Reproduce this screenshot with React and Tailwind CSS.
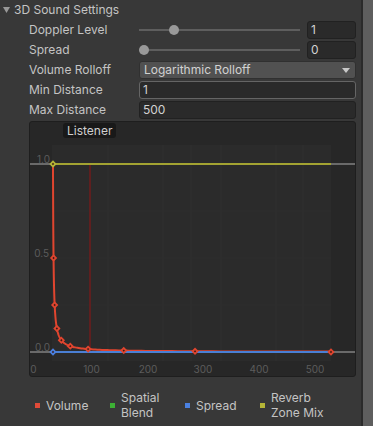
import React from "react";

const font = "font-['Inter','Noto_Sans',sans-serif]";

// chart geometry, in svg coords (panel inner origin)
const xOf = (d) => 22.44 + 0.557 * d;
const yOf = (v) => 230 - 188 * v;

const curvePoints = () => {
  const pts = [];
  for (let d = 1; d <= 500; d *= 1.05) pts.push([xOf(d), yOf(1 / d)]);
  pts.push([xOf(500), yOf(1 / 500)]);
  return pts.map((p) => p[0].toFixed(2) + "," + p[1].toFixed(2)).join(" ");
};

const keys = [1, 2, 4, 8, 16, 32, 64, 128, 256];

const Key = ({ x, y, color }) => (
  <g transform={`translate(${x} ${y}) rotate(45)`}>
    <rect x={-2.6} y={-2.6} width={5.2} height={5.2} fill={color} />
    <rect x={-0.8} y={-0.8} width={1.6} height={1.6} fill="#3a1a14" />
  </g>
);

const Slider = ({ left, value }) => (
  <div className="flex items-center h-[18px] gap-[7px]">
    <div className="relative flex-1 h-[18px] flex items-center">
      <div className="w-full h-[2px] bg-[#5e5e5e]" />
      <div
        className="absolute top-[4px] w-[10px] h-[10px] rounded-full bg-[#999999]"
        style={{ left }}
      />
    </div>
    <div className="w-[49px] h-[18px] rounded-[3px] border border-[#212121] bg-[#2a2a2a] pl-[3px] flex items-center text-[#d2d2d2]">
      {value}
    </div>
  </div>
);

const Row = ({ label, children }) => (
  <div className="h-[20px] flex items-center pl-[29px] pr-[5px]">
    <div className="w-[110px] text-[#c4c4c4]">{label}</div>
    <div className="flex-1">{children}</div>
  </div>
);

const Field = ({ value, hover }) => (
  <div
    className={
      "h-[18px] rounded-[3px] border bg-[#2a2a2a] pl-[3px] flex items-center text-[#d2d2d2] " +
      (hover ? "border-[#656565]" : "border-[#212121]")
    }
  >
    {value}
  </div>
);

const Chart = () => (
  <svg width="325" height="254" className="block">
    <rect x="22" y="23" width="279" height="216" fill="#2b2b2b" />
    {[78, 133, 161, 191, 246, 273].map((x) => (
      <line key={x} x1={x} y1={23} x2={x} y2={239} stroke="#303030" strokeWidth="1" />
    ))}
    {[89, 136, 183].map((y) => (
      <line key={y} x1={22} y1={y} x2={301} y2={y} stroke="#2f2f2f" strokeWidth="1" />
    ))}
    <g fill="#5c5c5c" fontFamily="Inter, sans-serif" fontSize="10">
      <text x="20" y="41" textAnchor="end">1.0</text>
      <text x="19" y="135" textAnchor="end">0.5</text>
      <text x="20" y="229" textAnchor="end">0.0</text>
      <text x="3.5" y="251" textAnchor="middle">0</text>
      <text x="61.5" y="251" textAnchor="middle">100</text>
      <text x="118" y="251" textAnchor="middle">200</text>
      <text x="173" y="251" textAnchor="middle">300</text>
      <text x="229" y="251" textAnchor="middle">400</text>
      <text x="285" y="251" textAnchor="middle">500</text>
    </g>
    <line x1="0" y1="42" x2="23" y2="42" stroke="#6a6a6a" strokeWidth="2" />
    <line x1="0" y1="230" x2="23" y2="230" stroke="#6a6a6a" strokeWidth="2" />
    <line x1="301" y1="42" x2="325" y2="42" stroke="#6a6a6a" strokeWidth="2" />
    <line x1="301" y1="230" x2="325" y2="230" stroke="#6a6a6a" strokeWidth="2" />
    <line x1="60" y1="42" x2="60" y2="229" stroke="#5e1f1f" strokeWidth="2" />
    <line x1="23" y1="42" x2="301" y2="42" stroke="#a3a332" strokeWidth="2" />
    <polyline points={curvePoints()} fill="none" stroke="#e0452f" strokeWidth="2" />
    <line x1="23" y1="230" x2="301" y2="230" stroke="#4a7fd4" strokeWidth="2" />
    {keys.slice(1).map((d) => (
      <Key key={d} x={xOf(d)} y={yOf(1 / d)} color="#e0452f" />
    ))}
    <Key x={301} y={230} color="#e0452f" />
    <Key x={23} y={230} color="#4a80e0" />
    <Key x={23} y={42} color="#b5b537" />
  </svg>
);

const LegendItem = ({ color, lines }) => (
  <div className="w-[75px] flex items-center gap-[6px]">
    <div className={"w-[5px] h-[5px] shrink-0 " + color} />
    <div className="leading-[15px] text-[#c4c4c4]">
      {lines.map((l) => (
        <div key={l}>{l}</div>
      ))}
    </div>
  </div>
);

export default function App() {
  return (
    <div className={"w-[373px] h-[426px] bg-[#383838] flex overflow-hidden text-[12px] " + font}>
      <div className="flex-1 flex flex-col">
        {/* header */}
        <div className="h-[20px] flex items-center pl-[3px] gap-[4px] text-[#c4c4c4]">
          <svg width="7" height="6" viewBox="0 0 7 6">
            <path d="M0 0 L7 0 L3.5 6 Z" fill="#999999" />
          </svg>
          <span>3D Sound Settings</span>
        </div>

        <Row label="Doppler Level">
          <Slider left={30} value="1" />
        </Row>
        <Row label="Spread">
          <Slider left={0} value="0" />
        </Row>
        <Row label="Volume Rolloff">
          <div className="h-[18px] rounded-[3px] border border-[#303030] bg-[#515151] pl-[4px] pr-[5px] flex items-center justify-between text-[#d2d2d2]">
            <span>Logarithmic Rolloff</span>
            <svg width="8" height="5" viewBox="0 0 8 5">
              <path d="M0 0 L8 0 L4 5 Z" fill="#c8c8c8" />
            </svg>
          </div>
        </Row>
        <Row label="Min Distance">
          <Field value="1" hover />
        </Row>
        <Row label="Max Distance">
          <Field value="500" />
        </Row>

        {/* curve panel */}
        <div className="relative mt-[1px] ml-[29px] mr-[5px] h-[256px] rounded-[3px] border border-[#1e1e1e] bg-[#272727] overflow-hidden">
          <Chart />
          <div className="absolute left-[33px] top-[1px] h-[15px] px-[4px] rounded-[3px] bg-[#191919] text-[#d0d0d0] flex items-center">
            Listener
          </div>
        </div>

        {/* legend */}
        <div className="flex-1 flex items-center pl-[35px] pt-[7px]">
          <LegendItem color="bg-[#e04a38]" lines={["Volume"]} />
          <LegendItem color="bg-[#3cb034]" lines={["Spatial", "Blend"]} />
          <LegendItem color="bg-[#4a80e0]" lines={["Spread"]} />
          <LegendItem color="bg-[#b5b537]" lines={["Reverb", "Zone Mix"]} />
        </div>
      </div>
      <div className="w-[12px] border-l-2 border-[#2a2a2a] bg-[#5e5e5e]" />
    </div>
  );
}
